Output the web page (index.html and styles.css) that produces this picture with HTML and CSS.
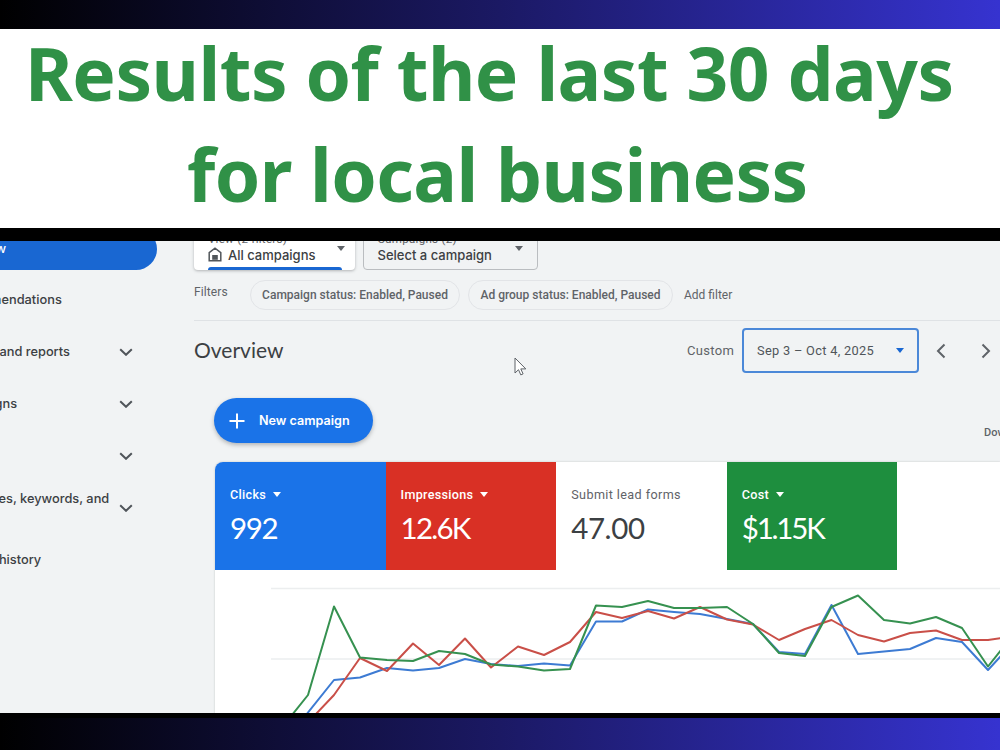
FILE: index.html
```html
<!DOCTYPE html>
<html lang="en">
<head>
  <meta charset="UTF-8">
  <meta name="viewport" content="width=device-width, initial-scale=1.0">
  <title>Campaign Results</title>
  <link rel="stylesheet" href="styles.css">
</head>
<body>

<header class="banner">
  <h1><span class="line-one">Results of the last 30 days</span><span class="line-two">for local business</span></h1>
</header>

<div class="frame">
  <div class="dashboard">
    <nav class="sidebar">
      <div class="nav-item active"><span>Overview</span></div>
      <div class="nav-item"><span>Recommendations</span></div>
      <div class="nav-item"><span>Insights and reports</span><svg class="chevron" viewBox="0 0 14 8"><path d="M1.2 1.2 7 6.8 12.8 1.2"/></svg></div>
      <div class="nav-item"><span>Campaigns</span><svg class="chevron" viewBox="0 0 14 8"><path d="M1.2 1.2 7 6.8 12.8 1.2"/></svg></div>
      <div class="nav-item"><span>Goals</span><svg class="chevron" viewBox="0 0 14 8"><path d="M1.2 1.2 7 6.8 12.8 1.2"/></svg></div>
      <div class="nav-item"><span>Audiences, keywords, and<br>content</span><svg class="chevron" viewBox="0 0 14 8"><path d="M1.2 1.2 7 6.8 12.8 1.2"/></svg></div>
      <div class="nav-item"><span>Change history</span></div>
    </nav>

    <main class="main">
      <div class="selectors">
        <div class="selector selected">
          <small>View (2 filters)</small>
          <div class="value">
            <svg class="home" viewBox="0 0 14 15"><path d="M1.2 5.6 7 1.2l5.8 4.4v8.2H1.2z" fill="none" stroke="#50555a" stroke-width="1.5"/><path d="M4.2 8h5.6v4.8H4.2z" fill="#50555a"/></svg>
            <span>All campaigns</span>
          </div>
          <i class="caret"></i>
        </div>
        <div class="selector">
          <small>Campaigns (2)</small>
          <div class="value"><span>Select a campaign</span></div>
          <i class="caret"></i>
        </div>
      </div>

      <div class="filters">
        <span class="filters-label">Filters</span>
        <span class="chip chip-campaign"><span>Campaign status: Enabled, Paused</span></span>
        <span class="chip chip-group"><span>Ad group status: Enabled, Paused</span></span>
        <span class="add-filter">Add filter</span>
      </div>

      <div class="title-row">
        <h2>Overview</h2>
        <span class="custom">Custom</span>
        <div class="date-box"><span>Sep 3 – Oct 4, 2025</span><i class="caret"></i></div>
        <svg class="arrow" viewBox="0 0 10 16"><path d="M8.5 1.5 2 8l6.5 6.5"/></svg>
        <svg class="arrow next" viewBox="0 0 10 16"><path d="M1.5 1.5 8 8l-6.5 6.5"/></svg>
      </div>

      <div class="actions">
        <button class="new-campaign">
          <svg viewBox="0 0 16 16"><path d="M8 .5v15M.5 8h15"/></svg>
          <span>New campaign</span>
        </button>
        <span class="download">Download</span>
      </div>

      <section class="card">
        <div class="tiles">
          <div class="tile blue"><p>Clicks<i class="caret"></i></p><strong>992</strong></div>
          <div class="tile red"><p>Impressions<i class="caret"></i></p><strong>12.6K</strong></div>
          <div class="tile plain"><p>Submit lead forms</p><strong>47.00</strong></div>
          <div class="tile green"><p>Cost<i class="caret"></i></p><strong>$1.15K</strong></div>
        </div>
        <svg class="chart" viewBox="215 570 785 143">
          <path class="grid" d="M271 588.5H1000M271 659H1000"/>
          <polyline class="l-blue" points="306,715 334,680 360,677.5 387,668 413,670.5 439,668 465,659 491,664 518,666 544,663.5 570,665.5 596,621.5 622,621.5 648,609.5 674,612 700,614 727,619 753,624 779,652 805,654 831.5,605 858,654 884,651.5 910,649 936,638 962,642 988,670 1001,656"/>
          <polyline class="l-red" points="316,714 334,695 360,658 387,671 413,643.5 439,665 465,638.5 491,667.5 518,646.5 544,655 570,642 596,612 622,618 648,611 674,618.5 700,607 727,619.5 753,624.5 779,640 805,629 831.5,620 858,635 884,641.5 910,633 936,630.5 962,640 988,640 1001,638"/>
          <polyline class="l-green" points="292,715 308,695 334,606.5 360,657.5 387,660 413,661 439,651 465,654 491,664.5 518,666.5 544,670.5 570,669 596,605.5 622,607 648,601 674,608 700,608 727,607 753,624 779,653 805,656 831.5,607 858,595.5 884,620 910,623.5 936,617 962,628 988,666.5 1001,650"/>
        </svg>
      </section>

      <svg class="cursor" viewBox="0 0 13 19"><path d="M1 1v15l3.5-3.3 2.3 5.2 2.3-1-2.3-5h5z"/></svg>
    </main>
  </div>
</div>

</body>
</html>
```
FILE: styles.css
```css
* { margin: 0; padding: 0; box-sizing: border-box; }
body { width: 1000px; height: 750px; overflow: hidden; padding-top: 29px; background: linear-gradient(90deg, #000 0%, #1b1964 50%, #3633d0 100%); font-family: Roboto, sans-serif; color: #3c4043; }

.banner { height: 199px; background: #fff; }
.banner h1 { display: flex; flex-direction: column; font-family: "Noto Sans", sans-serif; font-size: 73px; line-height: 101px; font-weight: 700; color: #309147; white-space: nowrap; transform: translateY(-7px); }
.line-one { padding-left: 25px; letter-spacing: -.52px; }
.line-two { padding-left: 187px; letter-spacing: -.6px; }

.frame { height: 490px; background: #000; padding: 12.5px 0 5.5px; }
.dashboard { display: flex; height: 472px; background: #f1f3f4; overflow: hidden; white-space: nowrap; }

.sidebar { width: 246px; margin-left: -52px; flex: none; font-family: Inter, sans-serif; font-size: 12.8px; font-weight: 500; }
.nav-item { display: flex; align-items: center; justify-content: space-between; height: 52px; width: 185px; line-height: 18px; }
.nav-item.active { height: 42px; width: 209px; margin: -12.5px 0 4px; color: #fff; background: #1967d2; border-radius: 0 21px 21px 0; }
.chevron { width: 14px; height: 8px; fill: none; stroke: #50555a; stroke-width: 2; }

.main { flex: 1; min-width: 0; position: relative; margin-top: -.5px; }
.selectors { display: flex; gap: 7.5px; height: 30px; }
.selector { position: relative; width: 175px; height: 58px; margin-top: -28px; border: 1.5px solid #babdc0; border-radius: 4px; padding: 18px 0 0 14px; }
.selector.selected { width: 161px; border: 0; background: #fff; padding: 18.5px 0 0 14px; box-shadow: 0 1px 3px rgba(60,64,67,.35); }
.selector.selected::after { content: ""; position: absolute; left: 14px; right: 13px; bottom: 0; height: 3px; background: #1967d2; border-radius: 3px 3px 0 0; }
.selector small { display: block; font-size: 11.5px; line-height: 16px; color: #5f6368; letter-spacing: .3px; }
.value { display: flex; align-items: center; gap: 6px; font-family: Inter, sans-serif; font-size: 13px; font-weight: 500; line-height: 18px; margin-top: -1px; color: #3c4043; }
.home { width: 14px; height: 15px; }
.caret { display: inline-block; border: 4.5px solid transparent; border-top: 5px solid currentColor; border-bottom: 0; }
.selector .caret { position: absolute; right: 10px; top: 34px; color: #5f6368; }
.selector:last-child .caret { right: 14px; top: 33px; }

.filters { display: flex; align-items: center; height: 51px; border-bottom: 1.5px solid #dfe2e5; font-size: 12px; color: #5f6368; }
.filters-label { width: 56px; margin-top: -6px; letter-spacing: .1px; }
.chip { display: flex; align-items: center; justify-content: center; height: 30px; border: 1px solid #e2e4e7; border-radius: 15px; font-weight: 500; }
.chip-campaign { width: 210px; margin-right: 8px; }
.chip-group { width: 205px; margin-right: 11px; }

.title-row { display: flex; align-items: center; height: 59px; color: #5f6368; }
.title-row h2 { flex: none; width: 493px; font-family: Lato, sans-serif; font-size: 21px; font-weight: 400; color: #3c4043; margin-top: -2px; }
.custom { width: 55px; font-size: 13px; letter-spacing: .3px; }
.date-box { display: flex; align-items: center; justify-content: space-between; width: 177px; height: 45px; padding: 0 13px; border: 2px solid #4b88d8; border-radius: 4px; font-size: 12.8px; letter-spacing: .3px; color: #50555a; }
.date-box .caret { color: #1967d2; }
.arrow { flex: none; width: 10px; height: 16px; margin-left: 17px; fill: none; stroke: #5f6368; stroke-width: 2; }
.arrow.next { margin-left: 35px; }

.actions { display: flex; justify-content: space-between; height: 82px; padding: 18px 0 0 20px; }
.new-campaign { display: flex; align-items: center; gap: 14px; width: 159px; height: 45px; padding-left: 15px; border: 0; border-radius: 23px; background: #1a73e8; color: #fff; font: 600 12.6px Inter, sans-serif; box-shadow: 0 2px 4px rgba(60,64,67,.35); }
.new-campaign svg { width: 16px; height: 16px; stroke: #fff; stroke-width: 2; }
.download { width: 16px; margin-top: 28px; font-size: 11px; font-weight: 500; color: #5f6368; }

.card { margin-left: 21px; height: 260px; background: #fff; border-radius: 8px 0 0 0; overflow: hidden; box-shadow: 0 0 2px rgba(60,64,67,.3); }
.tiles { display: flex; height: 108px; }
.tile { width: 170.6px; padding: 24px 0 0 15px; color: #fff; }
.tile p { font-size: 12.6px; line-height: 17px; font-weight: 500; letter-spacing: .3px; }
.tile .caret { margin-left: 7px; vertical-align: 2px; }
.tile strong { display: block; font-family: Lato, sans-serif; font-size: 29.5px; line-height: 36px; margin-top: 7px; font-weight: 400; letter-spacing: -1.3px; }
.blue { background: #1a73e8; }
.red { background: #d93025; }
.green { background: #1e8e3e; }
.tile.red strong { letter-spacing: -1.8px; }
.tile.green strong { letter-spacing: -2.2px; }
.tile.plain { color: #3c4043; }
.tile.plain p { font-weight: 400; letter-spacing: .4px; color: #5f6368; }
.tile.plain strong { letter-spacing: -.4px; }
.chart { display: block; width: 785px; height: 143px; fill: none; stroke-width: 2; stroke-linejoin: round; }
.grid { stroke: #eceeef; stroke-width: 1.5; }
.l-blue { stroke: #3d7bd3; }
.l-red { stroke: #c94f48; }
.l-green { stroke: #369150; }

.cursor { position: absolute; left: 320px; top: 116.5px; width: 13px; height: 19px; fill: #fff; stroke: #5f6368; }
```
